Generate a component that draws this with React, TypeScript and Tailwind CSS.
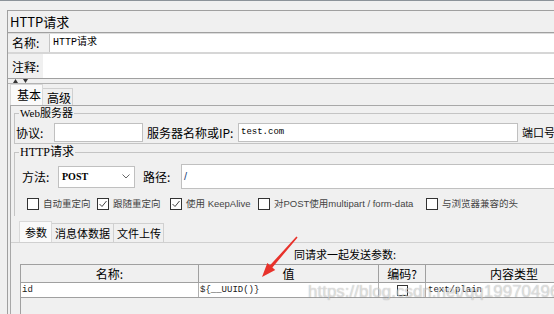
import React from "react";

function Check({ checked }: { checked?: boolean }) {
  return (
    <span className="flex h-[12px] w-[12px] shrink-0 items-center justify-center border border-[#333333] bg-white">
      {checked && (
        <svg width="10" height="10" viewBox="0 0 10 10">
          <path d="M1.5 5 L4 7.5 L8.5 2" fill="none" stroke="#444444" strokeWidth="1" />
        </svg>
      )}
    </span>
  );
}

function CheckItem({ w, checked, label }: { w: string; checked?: boolean; label: string }) {
  return (
    <div className={`flex items-center ${w}`}>
      <Check checked={checked} />
      <span className="ml-[4px] whitespace-nowrap font-['Liberation_Sans','Noto_Sans_CJK_SC',sans-serif] text-[9.5px] leading-[12px] text-[#444444]">
        {label}
      </span>
    </div>
  );
}

export default function App() {
  return (
    <div className="relative flex h-[314px] w-[554px] flex-col overflow-hidden bg-[#f0f0f0] font-['Noto_Sans_CJK_SC',sans-serif] text-black">
      <div className="h-px shrink-0 bg-[#8c939a]" />
      <div className="h-[9px] shrink-0" />
      <div className="ml-[7px] flex min-h-0 flex-1 flex-col border-l border-t border-[#a0a0a0]">
        {/* title */}
        <div className="h-[21px] shrink-0 whitespace-nowrap pl-[2px] text-[13px] leading-[21px]">HTTP请求</div>
        <div className="h-px shrink-0 bg-[#a0a0a0]" />
        <div className="h-px shrink-0 bg-[#dcdcdc]" />
        {/* name */}
        <div className="flex h-[18px] shrink-0">
          <div className="w-[41px] shrink-0 pl-[4px] text-[12px] leading-[18px]">名称:</div>
          <div className="flex-1 border-l border-[#c4c4c4] bg-white pl-[3px] font-['Liberation_Mono','Noto_Sans_CJK_SC',monospace] text-[10px] leading-[18px]">
            HTTP请求
          </div>
        </div>
        <div className="h-[2px] shrink-0 bg-[#d6d6d6]" />
        {/* comment */}
        <div className="flex h-[24px] shrink-0">
          <div className="w-[35px] shrink-0 pl-[4px] pt-[2px] text-[12px] leading-[22px]">注释:</div>
          <div className="flex-1 bg-white" />
        </div>
        <div className="h-px shrink-0 bg-[#a0a0a0]" />
        {/* split arrows */}
        <div className="flex h-[4px] shrink-0 pl-[5px]">
          <svg width="20" height="4" viewBox="0 0 20 4">
            <path d="M0 4 L2.5 0 L5 4 Z" fill="#333333" />
            <path d="M10 0 L15 0 L12.5 4 Z" fill="#333333" />
          </svg>
        </div>
        <div className="h-px shrink-0 bg-[#b4b4b4]" />
        {/* main tabs */}
        <div className="flex h-[21px] shrink-0 items-end pl-[2px]">
          <div className="h-[21px] w-[33px] whitespace-nowrap border-l border-r border-t border-[#d9d9d9] bg-[#fafafa] pl-[6px] text-[12px] leading-[20px]">
            基本
          </div>
          <div className="h-[17px] w-[30px] whitespace-nowrap border-r border-t border-[#d0d0d0] bg-[#f0f0f0] pl-[4px] text-[12px] leading-[17px]">
            高级
          </div>
        </div>
        {/* panel */}
        <div className="ml-[2px] flex min-h-0 flex-1 flex-col border-l border-t border-[#a8a8a8]">
          <div className="pl-[3px]">
            {/* Web server */}
            <fieldset className="mt-[1px] w-[600px] border border-[#c4c4c4] pb-[1px]">
              <legend className="ml-[4px] px-[1px] font-['Liberation_Serif','Noto_Sans_CJK_SC',serif] text-[11px] leading-[12px]">
                Web服务器
              </legend>
              <div className="mt-[4px] flex h-[19px] items-center">
                <div className="w-[39px] shrink-0 pl-[1px] text-[12px] leading-[19px]">协议:</div>
                <div className="h-[19px] w-[89px] shrink-0 border border-[#c0c0c0] bg-white" />
                <div className="ml-[4px] w-[91px] shrink-0 whitespace-nowrap text-[12px] leading-[19px]">服务器名称或IP:</div>
                <div className="h-[19px] w-[280px] shrink-0 border border-[#c0c0c0] bg-white pl-[2px] font-['Liberation_Mono',monospace] text-[9px] leading-[17px]">
                  test.com
                </div>
                <div className="ml-[4px] whitespace-nowrap text-[11px] leading-[19px]">端口号</div>
              </div>
            </fieldset>
            {/* HTTP request */}
            <fieldset className="mt-[2px] w-[600px] border border-b-0 border-[#c4c4c4] pb-[6px]">
              <legend className="ml-[4px] px-[1px] font-['Liberation_Serif','Noto_Sans_CJK_SC',serif] text-[12px] leading-[13px]">
                HTTP请求
              </legend>
              <div className="mt-[5px] flex h-[25px] items-center pl-[7px]">
                <div className="w-[36px] shrink-0 text-[12px] leading-[25px]">方法:</div>
                <div className="flex h-[22px] w-[77px] shrink-0 items-center justify-between border border-[#c0c0c0] bg-white pl-[3px] pr-[4px]">
                  <span className="font-['Liberation_Serif',serif] text-[10px] font-bold leading-[20px]">POST</span>
                  <svg width="8" height="5" viewBox="0 0 8 5">
                    <path d="M0.5 0.5 L4 4 L7.5 0.5" fill="none" stroke="#666666" strokeWidth="1" />
                  </svg>
                </div>
                <div className="ml-[8px] w-[38px] shrink-0 text-[12px] leading-[25px]">路径:</div>
                <div className="h-[25px] w-[420px] shrink-0 border border-[#c0c0c0] bg-white pl-[2px] font-['Liberation_Sans',sans-serif] text-[11px] leading-[22px] text-[#1d3f7a]">
                  /
                </div>
              </div>
              <div className="mt-[9px] flex h-[12px] items-center pl-[12px]">
                <CheckItem w="w-[70px]" label="自动重定向" />
                <CheckItem w="w-[73px]" checked label="跟随重定向" />
                <CheckItem w="w-[88px]" checked label="使用 KeepAlive" />
                <CheckItem w="w-[168px]" label="对POST使用multipart / form-data" />
                <CheckItem w="w-[120px]" label="与浏览器兼容的头" />
              </div>
            </fieldset>
          </div>
          {/* params tabs */}
          <div className="ml-[8px] mt-[5px] flex h-[21px] shrink-0 items-end">
            <div className="h-[21px] w-[33px] whitespace-nowrap border-l border-r border-t border-[#d9d9d9] bg-[#fafafa] pl-[5px] text-[11px] leading-[20px]">
              参数
            </div>
            <div className="h-[19px] w-[62px] whitespace-nowrap border-r border-t border-[#d0d0d0] pl-[3px] text-[11px] leading-[19px]">
              消息体数据
            </div>
            <div className="h-[19px] w-[50px] whitespace-nowrap border-r border-t border-[#d0d0d0] pl-[3px] text-[11px] leading-[19px]">
              文件上传
            </div>
          </div>
          <div className="flex min-h-0 flex-1 flex-col border-t border-[#d0d0d0]">
            <div className="h-[21px] shrink-0 whitespace-nowrap pl-[283px] pt-[4px] text-[11px] leading-[14px]">
              同请求一起发送参数:
            </div>
            {/* table */}
            <div className="ml-[9px] flex min-h-0 flex-1 flex-col border-l border-[#a0a0a0]">
              <div className="flex h-[19px] shrink-0 border-b border-t border-[#a0a0a0] bg-[#f0f0f0] text-[12px] leading-[17px]">
                <div className="w-[178px] shrink-0 border-r border-[#a0a0a0] text-center">名称:</div>
                <div className="w-[180px] shrink-0 border-r border-[#a0a0a0] text-center">值</div>
                <div className="w-[47px] shrink-0 border-r border-[#a0a0a0] text-center">编码?</div>
                <div className="w-[176px] shrink-0 text-center">内容类型</div>
              </div>
              <div className="flex h-[15px] shrink-0 border-b border-[#a0a0a0] bg-white font-['Liberation_Mono',monospace] text-[9px] leading-[14px] text-[#1a1a1a]">
                <div className="w-[178px] shrink-0 border-r border-[#b0b0b0] pl-[1px]">id</div>
                <div className="w-[180px] shrink-0 border-r border-[#b0b0b0] pl-[1px]">{"${__UUID()}"}</div>
                <div className="flex w-[47px] shrink-0 items-center justify-center border-r border-[#b0b0b0]">
                  <span className="h-[11px] w-[11px] border border-[#333333] bg-white" />
                </div>
                <div className="w-[176px] shrink-0 pl-[2px]">text/plain</div>
              </div>
            </div>
          </div>
        </div>
      </div>

      {/* red annotation arrow */}
      <svg className="absolute left-0 top-0" width="554" height="314" viewBox="0 0 554 314">
        <polygon
          points="297.6,237.4 272.4,267.5 275.2,269.9 262,277 267.3,262.9 270,265.3 296.4,236.6"
          fill="#e8322b"
        />
      </svg>

      {/* watermark */}
      <div className="absolute left-[308px] top-[282px] whitespace-nowrap font-['Liberation_Sans',sans-serif] text-[17px] leading-[20px] text-[rgba(255,255,255,0.55)] [text-shadow:0_0_1px_rgba(0,0,0,0.35)]">
        https://blog.csdn.net/qq19970496
      </div>
    </div>
  );
}
